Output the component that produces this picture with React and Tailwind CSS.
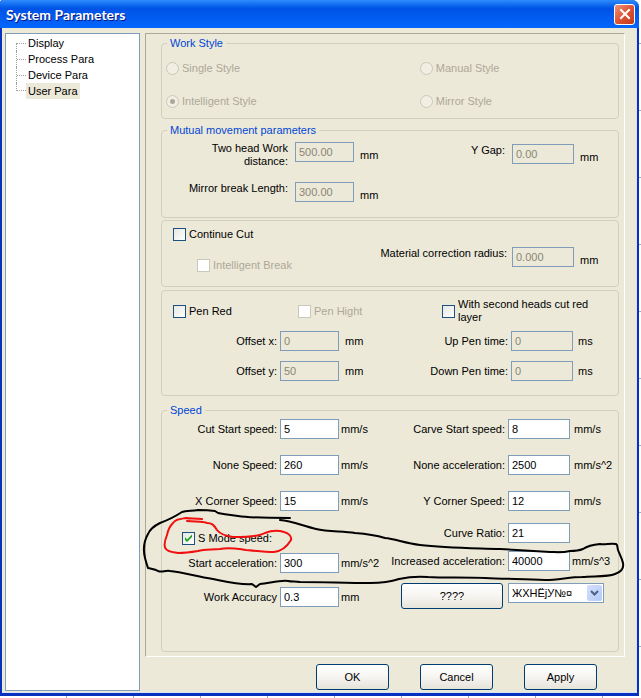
import React, { useId, useState } from "react";
import clsx from "clsx";

const treeItems = ["Display", "Process Para", "Device Para", "User Para"];

const Group = ({ title, className, children }) => (
  <fieldset
    className={clsx(
      "relative min-w-0 rounded-[4px] border border-[#d0d0bf]",
      className
    )}
  >
    {title && (
      <legend className="ml-[5px] px-[3px] leading-[14px] text-[#0046d5]">
        {title}
      </legend>
    )}
    {children}
  </fieldset>
);

// align "low": label sits at the top of the box, unit at the bottom
const Field = ({
  label,
  value,
  unit,
  disabled,
  low,
  className = "gap-[3px]",
  inputClass = "w-[59px]",
  unitClass = "w-[43px] ml-[2px]",
}) => {
  const id = useId();
  return (
    <div className={clsx("flex", low ? "items-start" : "items-center", className)}>
      <label
        htmlFor={id}
        className="flex-1 whitespace-nowrap text-right leading-[13px]"
      >
        {label}
      </label>
      <div className={clsx("flex", low ? "items-end" : "items-center")}>
        <input
          id={id}
          type="text"
          defaultValue={value}
          disabled={disabled}
          className={clsx(
            "h-5 border border-[#7f9db9] px-[3px] outline-none",
            disabled ? "bg-[#ece9d8] text-[#8a8677]" : "bg-white text-black",
            inputClass
          )}
        />
        <span className={clsx("whitespace-nowrap leading-[14px]", unitClass)}>
          {unit}
        </span>
      </div>
    </div>
  );
};

const Check = ({ label, disabled, defaultChecked = false, className }) => {
  const [checked, setChecked] = useState(defaultChecked);
  return (
    <label
      className={clsx(
        "flex items-center gap-[3px] leading-[13px]",
        disabled && "text-[#aca899]",
        className
      )}
    >
      <span className="relative flex h-[13px] w-[13px] shrink-0">
        <input
          type="checkbox"
          checked={checked}
          disabled={disabled}
          onChange={(e) => setChecked(e.target.checked)}
          className={clsx(
            "h-[13px] w-[13px] appearance-none border",
            disabled
              ? "border-[#cac8bb] bg-white"
              : "border-[#1c5180] bg-linear-to-br from-[#e6e6e2] to-white"
          )}
        />
        {checked && (
          <svg
            viewBox="0 0 13 13"
            className="pointer-events-none absolute inset-0 h-[13px] w-[13px]"
          >
            <path d="M3 5v3l2 2 5-5V2.5L5 7.5z" fill="#21a121" />
          </svg>
        )}
      </span>
      <span>{label}</span>
    </label>
  );
};

const Radio = ({ label, defaultChecked }) => (
  <label className="flex h-[14px] items-center gap-[3px] text-[#aca899]">
    <span className="relative flex h-[13px] w-[13px] shrink-0 items-center justify-center">
      <input
        type="radio"
        name="workStyle"
        disabled
        defaultChecked={defaultChecked}
        className="peer h-[13px] w-[13px] appearance-none rounded-full border border-[#cac8bb] bg-[#f1efe3]"
      />
      <span className="pointer-events-none absolute hidden h-[5px] w-[5px] rounded-full bg-[#aca899] peer-checked:block" />
    </span>
    {label}
  </label>
);

const Button = ({ className, children }) => (
  <button
    type="button"
    className={clsx(
      "h-[26px] rounded-[3px] border border-[#003c74] bg-linear-to-b from-white via-[#f6f5f1] to-[#e6e3da]",
      className
    )}
  >
    {children}
  </button>
);

// Hand drawn marks around the S mode settings
const Scribble = () => (
  <svg
    viewBox="140 505 490 90"
    className="pointer-events-none absolute -left-[22px] top-[88px] h-[90px] w-[490px]"
    fill="none"
    strokeWidth="2"
    strokeLinecap="round"
    strokeLinejoin="round"
  >
    <path
      stroke="#000"
      d="M290 518C270 518 250 518 238 516C230 515 222 514 218 513L215 511C208 510 203 510 198 510C190 511 186 511 182 512C176 516 168 520 160 523C154 526 150 529 148 534C144 541 143 550 145 558C146 562 147 565 148 568C152 569 155 569 158 571C162 573 165 570 170 571C182 572 195 576 213 579C228 582 240 585 252 584L256 587L260 584C270 583 280 580 288 581C292 582 296 581 300 582C325 582 345 583 370 583C380 583 390 582 399 579C408 577 416 576 428 577C445 578 465 577 485 578C505 579 525 579 545 580C558 580 570 577 582 577C595 576 608 577 615 574C621 572 624 568 623 563C622 558 619 553 618 550C617 547 618 545 616 544C610 543 605 545 600 544C590 545 586 547 583 549C578 551 573 551 570 551C562 553 555 552 550 552C535 551 515 550 500 549C470 548 445 548 420 545C405 543 395 539 385 538C375 535 368 534 355 533C342 531 328 532 316 529C303 526 292 521 280 520"
    />
    <path
      stroke="#f01010"
      d="M202 519C195 518 190 519 186 518C180 519 176 519 173 523C170 526 168 530 167 535C165 540 163 546 166 549C168 552 172 552 178 553C186 553 192 552 198 551C205 549 212 550 220 549C230 547 238 549 246 550C256 551 265 552 274 552C283 551 288 545 291 540C292 536 288 533 284 532C278 530 270 531 265 533C258 537 245 537 233 537C226 536 220 534 217 530C214 525 212 523 207 523C202 521 195 522 187 521"
    />
  </svg>
);

const App = () => {
  const [selected, setSelected] = useState("User Para");

  return (
    <div className="flex min-h-screen flex-col bg-white bg-[repeating-linear-gradient(to_right,transparent_0_66px,#a3abbb_66px_67px),repeating-linear-gradient(to_bottom,transparent_0_43px,#a3abbb_43px_44px,transparent_44px_67px)] pb-[2px] pr-[2px] font-['Liberation_Sans',Arial,sans-serif] text-[11px] leading-[14px] text-black">
      <div className="flex flex-1 flex-col rounded-tr-[7px] rounded-tl-[3px] bg-[#0831c0]">
        {/* Title bar */}
        <header className="flex h-7 items-center justify-between rounded-tr-[7px] rounded-tl-[3px] bg-linear-to-b from-[#2d8bfb] via-[#0053e6] via-30% to-[#0466fd] pl-1.5 pr-1">
          <h1 className="pt-[2px] font-['Lato',sans-serif] text-[14px] font-bold text-white [text-shadow:1px_1px_#0a1883]">
            System Parameters
          </h1>
          <button
            type="button"
            aria-label="Close"
            className="flex h-[21px] w-[21px] items-center justify-center rounded-[3px] border border-white bg-linear-to-br from-[#ee9378] via-[#dd5334] to-[#c03a16]"
          >
            <svg viewBox="0 0 12 12" className="h-3 w-3">
              <path
                d="M2 2L10 10M10 2L2 10"
                stroke="#fff"
                strokeWidth="2"
                strokeLinecap="square"
              />
            </svg>
          </button>
        </header>

        <div className="mb-[3px] ml-[2px] mr-[2px] flex flex-1 border-b border-r border-[#d6e4f5] bg-[#ece9d8] pb-px pl-[3px] pt-[5px]">
          {/* Tree */}
          <nav className="w-[135px] shrink-0 border border-[#7f9db9] bg-white pl-2.5 pt-[1px]">
            <ul>
              {treeItems.map((item, index) => (
                <li key={item} className="flex h-4 items-center">
                  <span
                    className={clsx(
                      "relative w-2.5 self-stretch border-l border-dotted border-[#a0a0a0]",
                      index === 0 && "mt-2 border-t",
                      index === treeItems.length - 1 && "mb-2 border-b"
                    )}
                  >
                    {index > 0 && index < treeItems.length - 1 && (
                      <span className="absolute inset-x-0 top-2 border-t border-dotted border-[#a0a0a0]" />
                    )}
                  </span>
                  <button
                    type="button"
                    onClick={() => setSelected(item)}
                    className={clsx(
                      "h-4 px-[2px]",
                      selected === item && "bg-[#ece9d8]"
                    )}
                  >
                    {item}
                  </button>
                </li>
              ))}
            </ul>
          </nav>

          <div className="ml-[5px] flex flex-1 flex-col">
            <main className="mr-[11px] flex-1 border border-b-white border-l-[#aca899] border-r-white border-t-[#aca899] pb-[3px] pl-[15px] pr-[5px] pt-[2px]">
              <Group title="Work Style">
                <div className="grid grid-cols-[256fr_200fr] gap-y-[19px] pb-2.5 pl-1 pt-[11px]">
                  <Radio label="Single Style" />
                  <Radio label="Manual Style" />
                  <Radio label="Intelligent Style" defaultChecked />
                  <Radio label="Mirror Style" />
                </div>
              </Group>

              <Group title="Mutual movement parameters" className="mt-1">
                <div className="grid grid-cols-[222fr_234fr] gap-y-3.5 pb-[15px] pt-[5px]">
                  <Field
                    label={
                      <>
                        Two head Work
                        <br />
                        distance:
                      </>
                    }
                    value="500.00"
                    unit="mm"
                    disabled
                    low
                    className="gap-[7px]"
                    unitClass="ml-1.5 w-6"
                  />
                  <Field
                    label="Y Gap:"
                    value="0.00"
                    unit="mm"
                    disabled
                    low
                    className="gap-[7px] pt-[2px]"
                    inputClass="w-[62px]"
                    unitClass="ml-1.5 w-[38px]"
                  />
                  <Field
                    label="Mirror break Length:"
                    value="300.00"
                    unit="mm"
                    disabled
                    low
                    className="gap-[7px]"
                    unitClass="ml-1.5 w-6"
                  />
                </div>
              </Group>

              <Group className="mt-[2px]">
                <div className="grid grid-cols-[190fr_266fr] pb-[14px] pt-[7px]">
                  <div className="flex flex-col gap-[18px]">
                    <Check label="Continue Cut" className="pl-[11px]" />
                    <Check
                      label="Intelligent Break"
                      disabled
                      className="pl-[35px]"
                    />
                  </div>
                  <Field
                    label="Material correction radius:"
                    value="0.000"
                    unit="mm"
                    disabled
                    low
                    className="gap-[5px] pt-[19px]"
                    inputClass="w-[62px]"
                    unitClass="ml-1.5 w-[38px]"
                  />
                </div>
              </Group>

              <Group className="mt-[3px]">
                <div className="grid grid-cols-[125fr_144fr_176fr] pl-[11px] pt-[7px]">
                  <Check label="Pen Red" />
                  <Check label="Pen Hight" disabled />
                  <Check
                    label={
                      <>
                        With second heads cut red
                        <br />
                        layer
                      </>
                    }
                  />
                </div>
                <div className="grid grid-cols-[222fr_234fr] gap-y-2.5 pb-3.5 pt-[7px]">
                  <Field
                    label="Offset x:"
                    value="0"
                    unit="mm"
                    disabled
                    unitClass="ml-1.5 w-[39px]"
                  />
                  <Field
                    label="Up Pen time:"
                    value="0"
                    unit="ms"
                    disabled
                    inputClass="w-[62px]"
                    unitClass="ml-[5px] w-10"
                  />
                  <Field
                    label="Offset y:"
                    value="50"
                    unit="mm"
                    disabled
                    unitClass="ml-1.5 w-[39px]"
                  />
                  <Field
                    label="Down Pen time:"
                    value="0"
                    unit="ms"
                    disabled
                    inputClass="w-[62px]"
                    unitClass="ml-[5px] w-10"
                  />
                </div>
              </Group>

              <Group title="Speed" className="mt-[7px]">
                <div className="grid grid-cols-[222fr_234fr] pb-[42px] pt-[2px]">
                  <div className="flex flex-col">
                    <Field label="Cut Start speed:" value="5" unit="mm/s" />
                    <Field
                      label="None Speed:"
                      value="260"
                      unit="mm/s"
                      className="mt-4 gap-[3px]"
                    />
                    <Field
                      label="X Corner Speed:"
                      value="15"
                      unit="mm/s"
                      className="mt-4 gap-[3px]"
                    />
                    <Check
                      label="S Mode speed:"
                      defaultChecked
                      className="mt-5 h-3.5 pl-5"
                    />
                    <Field
                      label="Start acceleration:"
                      value="300"
                      unit="mm/s^2"
                      className="mt-2 gap-[3px]"
                    />
                    <Field
                      label="Work Accuracy"
                      value="0.3"
                      unit="mm"
                      className="mt-3.5 gap-[3px]"
                    />
                  </div>
                  <div className="flex flex-col">
                    <Field
                      label="Carve Start speed:"
                      value="8"
                      unit="mm/s"
                      inputClass="w-[62px]"
                      unitClass="ml-1 w-11"
                    />
                    <Field
                      label="None acceleration:"
                      value="2500"
                      unit="mm/s^2"
                      className="mt-4 gap-[3px]"
                      inputClass="w-[62px]"
                      unitClass="ml-1 w-11"
                    />
                    <Field
                      label="Y Corner Speed:"
                      value="12"
                      unit="mm/s"
                      className="mt-4 gap-[3px]"
                      inputClass="w-[62px]"
                      unitClass="ml-1 w-11"
                    />
                    <Field
                      label="Curve Ratio:"
                      value="21"
                      className="mt-3 gap-[3px]"
                      inputClass="w-[62px]"
                      unitClass="ml-1 w-11"
                    />
                    <Field
                      label="Increased acceleration:"
                      value="40000"
                      unit="mm/s^3"
                      className="mt-2 gap-[3px]"
                      inputClass="w-[62px]"
                      unitClass="ml-[2px] w-[46px]"
                    />
                    <div className="mt-3 flex items-start justify-end gap-[5px] pr-3.5">
                      <Button className="w-[102px]">????</Button>
                      <div className="relative w-24">
                        <select
                          aria-label="Mode"
                          className="h-5 w-full appearance-none border border-[#7f9db9] bg-white pl-[3px] text-black outline-none"
                        >
                          <option>ЖХНЁјУ№¤</option>
                        </select>
                        <span className="pointer-events-none absolute right-[2px] top-[2px] flex h-4 w-[15px] items-center justify-center rounded-[2px] bg-linear-to-br from-[#d3e0fd] to-[#b4caf6]">
                          <svg viewBox="0 0 9 6" className="h-1.5 w-[9px]">
                            <path
                              d="M1 1l3.500 3.500L8 1"
                              fill="none"
                              stroke="#4d6185"
                              strokeWidth="2"
                            />
                          </svg>
                        </span>
                      </div>
                    </div>
                  </div>
                </div>
                <Scribble />
              </Group>
            </main>

            <footer className="flex justify-end gap-[31px] pb-px pr-[39px] pt-[7px]">
              <Button className="w-[73px]">OK</Button>
              <Button className="w-[73px]">Cancel</Button>
              <Button className="w-[73px]">Apply</Button>
            </footer>
          </div>
        </div>
      </div>
    </div>
  );
};

export default App;
